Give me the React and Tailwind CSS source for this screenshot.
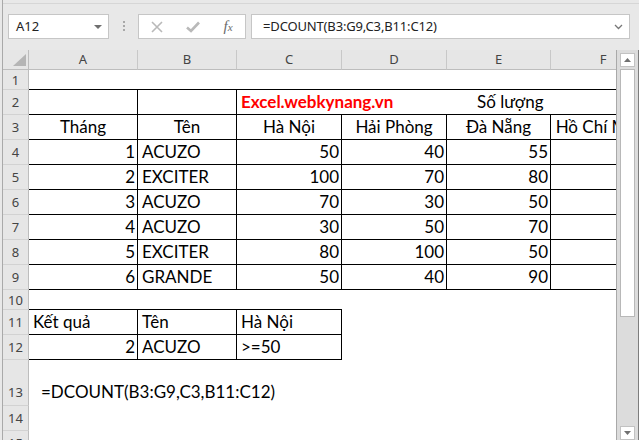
import React from "react";

const COLW = ["w-[109px]", "w-[99px]", "w-[105px]", "w-[105px]", "w-[104px]", "w-[105px]"];

const BORDER = {
  rb: "border-r border-b border-black",
  b: "border-b border-black",
  r: "border-r border-black",
  "": "",
};

const ALIGN = {
  l: "justify-start pl-[4px]",
  r: "justify-end pr-[2px]",
  c: "justify-center",
};

const HEIGHT = {
  20: "h-[20px]",
  25: "h-[25px]",
  46: "h-[46px]",
};

function c(text, align = "l", border = "", extra = "") {
  return { text, align, border, extra };
}

const dataRows = [
  [1, "ACUZO", 50, 40, 55],
  [2, "EXCITER", 100, 70, 80],
  [3, "ACUZO", 70, 30, 50],
  [4, "ACUZO", 30, 50, 70],
  [5, "EXCITER", 80, 100, 50],
  [6, "GRANDE", 50, 40, 90],
];

const rows = [
  { n: 1, h: 20, cells: [c("", "l", "b"), c("", "l", "b"), c("", "l", "b"), c("", "l", "b"), c("", "l", "b"), c("", "l", "b")] },
  {
    n: 2,
    h: 25,
    cells: [
      c("", "l", "rb"),
      c("", "l", "rb"),
      c(
        <span className="font-bold text-[#ff0000]">Excel.webkynang.vn</span>,
        "l",
        "b",
        "pl-[3px]"
      ),
      c("", "l", "b"),
      c(<span className="pl-[30px]">Số lượng</span>, "l", "b", "!pl-0"),
      c("", "l", "b"),
    ],
  },
  {
    n: 3,
    h: 25,
    cells: [
      c("Tháng", "c", "rb"),
      c("Tên", "c", "rb"),
      c("Hà Nội", "c", "rb"),
      c("Hải Phòng", "c", "rb"),
      c("Đà Nẵng", "c", "rb"),
      c("Hồ Chí Minh", "c", "rb"),
    ],
  },
  ...dataRows.map((r, i) => ({
    n: 4 + i,
    h: 25,
    cells: [
      c(String(r[0]), "r", "rb"),
      c(r[1], "l", "rb"),
      c(String(r[2]), "r", "rb"),
      c(String(r[3]), "r", "rb"),
      c(String(r[4]), "r", "rb"),
      c("", "l", "rb"),
    ],
  })),
  { n: 10, h: 20, cells: [c("", "l", "b"), c("", "l", "b"), c("", "l", "b")] },
  { n: 11, h: 25, cells: [c("Kết quả", "l", "rb"), c("Tên", "l", "rb"), c("Hà Nội", "l", "rb")] },
  { n: 12, h: 25, cells: [c("2", "r", "rb"), c("ACUZO", "l", "rb"), c(">=50", "l", "rb")] },
  { n: 13, h: 46, cells: [c("=DCOUNT(B3:G9,C3,B11:C12)", "l", "", "!pl-[12px] pb-[2px]")] },
  { n: 14, h: 25, cells: [] },
  { n: 15, h: 25, cells: [] },
];

function Corner() {
  return (
    <div className="w-[26px] h-[20px] shrink-0 bg-[#e6e6e6] border-r border-b border-[#bdbdbd]">
      <svg width="26" height="20" className="block">
        <polygon points="10,16 23,16 23,4" fill="#b5b5b5" />
      </svg>
    </div>
  );
}

export default function App() {
  return (
    <div className="w-[639px] h-[440px] overflow-hidden bg-[#e8e8e8] pl-[2px] font-['Lato',sans-serif] text-black">
      <div className="h-full border-l border-[#a9a9a9] flex flex-col">
        {/* Formula bar */}
        <div className="h-[47px] mt-[3px] shrink-0 flex items-start pt-[10px] border-t border-t-[#d6d6d6]">
          <div className="ml-[5px] w-[101px] h-[25px] bg-white border border-[#c6c6c6] flex items-center justify-between pl-[7px] pr-[6px] font-['Noto_Sans',sans-serif] text-[13px] text-[#222]">
            <span>A12</span>
            <svg width="8" height="5" className="mt-[1px]">
              <polygon points="0,0 8,0 4,4" fill="#6f6f6f" />
            </svg>
          </div>
          <div className="ml-[14px] mt-[7px] flex flex-col gap-[2px]">
            <div className="w-[2px] h-[2px] bg-[#a8a8a8]" />
            <div className="w-[2px] h-[2px] bg-[#a8a8a8]" />
            <div className="w-[2px] h-[2px] bg-[#a8a8a8]" />
          </div>
          <div className="ml-[13px] w-[108px] h-[25px] bg-white border border-[#c6c6c6] flex items-center">
            <div className="w-[36px] flex justify-center">
              <svg width="12" height="12" viewBox="0 0 12 12">
                <path d="M1 1 L11 11 M11 1 L1 11" stroke="#b9b9b9" strokeWidth="1.6" fill="none" />
              </svg>
            </div>
            <div className="w-[36px] flex justify-center">
              <svg width="14" height="12" viewBox="0 0 14 12">
                <path d="M1 6.5 L5 10 L13 1.5" stroke="#b9b9b9" strokeWidth="2.6" fill="none" />
              </svg>
            </div>
            <div className="w-[34px] flex justify-center items-baseline font-['Liberation_Serif',serif] italic text-[#6a6a6a]">
              <span className="text-[15px] leading-none">f</span>
              <span className="text-[11px] leading-none">x</span>
            </div>
          </div>
          <div className="ml-[5px] w-[379px] h-[25px] bg-white border border-[#c6c6c6] flex items-center justify-between pl-[11px] pr-[6px] font-['Noto_Sans',sans-serif] text-[13px] text-[#222] tracking-[-0.15px]">
            <span>=DCOUNT(B3:G9,C3,B11:C12)</span>
            <svg width="9" height="6" viewBox="0 0 9 6">
              <path d="M1 1 L4.5 4.5 L8 1" stroke="#777" strokeWidth="1.3" fill="none" />
            </svg>
          </div>
        </div>

        {/* Sheet + scrollbar */}
        <div className="flex flex-1 min-h-0">
          <div className="w-[613px] overflow-hidden bg-white">
            {/* Column headers */}
            <div className="flex h-[20px] bg-[#e6e6e6]">
              <Corner />
              {["A", "B", "C", "D", "E", "F"].map((l, i) => (
                <div
                  key={l}
                  className={`${COLW[i]} shrink-0 h-[20px] border-r border-b border-r-[#c8c8c8] border-b-[#bdbdbd] flex items-center justify-center font-['Noto_Sans',sans-serif] text-[13px] text-[#444]`}
                >
                  {l}
                </div>
              ))}
            </div>
            {/* Rows */}
            {rows.map((row) => (
              <div key={row.n} className={`flex ${HEIGHT[row.h]}`}>
                <div
                  className={`w-[26px] shrink-0 h-full bg-[#e6e6e6] border-r border-b border-r-[#bdbdbd] border-b-[#d2d2d2] flex justify-center font-['Noto_Sans',sans-serif] text-[13px] text-[#444] ${
                    row.h === 46 ? "items-end pb-[3px]" : "items-center pt-[2px]"
                  }`}
                >
                  {row.n}
                </div>
                {row.cells.map((cell, i) => (
                  <div
                    key={i}
                    className={`${COLW[i]} shrink-0 h-full flex items-end whitespace-nowrap text-[17px] leading-[24px] ${BORDER[cell.border]} ${ALIGN[cell.align]} ${cell.extra}`}
                  >
                    {cell.text}
                  </div>
                ))}
              </div>
            ))}
          </div>
          {/* Scrollbar */}
          <div className="w-[23px] shrink-0 bg-[#dcdcdc] border-l border-r border-l-[#a9a9a9] border-r-[#7d7d7d] flex flex-col">
            <div className="ml-[3px] mt-[3px] w-[15px] h-[14px] bg-white border border-[#c2c2c2] flex items-center justify-center">
              <svg width="7" height="4">
                <polygon points="0,4 7,4 3.5,0" fill="#707070" />
              </svg>
            </div>
            <div className="ml-[3px] mt-[2px] w-[15px] h-[249px] bg-white border border-[#b8b8b8]" />
            <div className="ml-[3px] mt-[109px] w-[15px] h-[14px] bg-white border border-[#c2c2c2] flex items-center justify-center">
              <svg width="7" height="4">
                <polygon points="0,0 7,0 3.5,4" fill="#707070" />
              </svg>
            </div>
          </div>
        </div>
      </div>
    </div>
  );
}
